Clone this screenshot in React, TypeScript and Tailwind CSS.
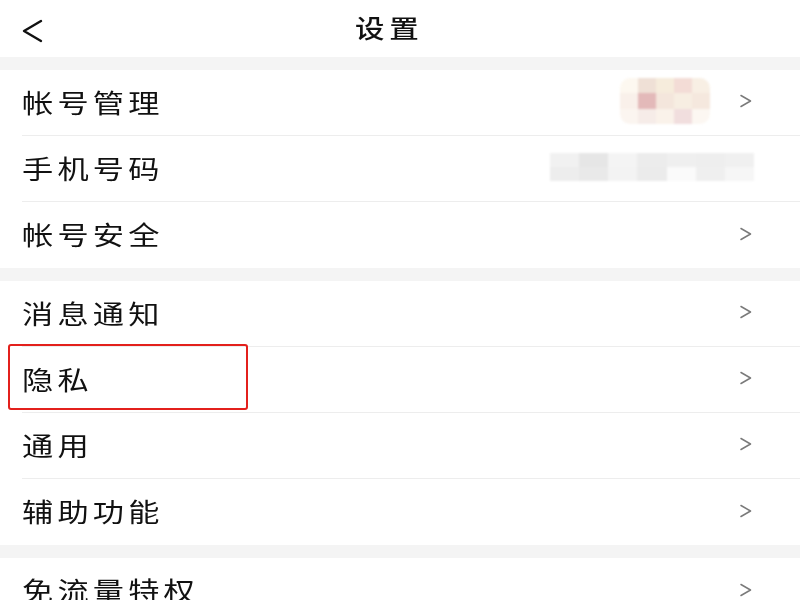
type Row = { label: string; extra?: "avatar" | "phone"; last?: boolean; highlight?: boolean };

const groups: Row[][] = [
  [{ label: "帐号管理", extra: "avatar" }, { label: "手机号码", extra: "phone" }, { label: "帐号安全", last: true }],
  [{ label: "消息通知" }, { label: "隐私", highlight: true }, { label: "通用" }, { label: "辅助功能", last: true }],
  [{ label: "免流量特权", last: true }],
];

const avatarCells = [
  "#fdf8f0", "#efe0d6", "#f6ecdc", "#f3dcd6", "#f8efe4",
  "#f9f0ea", "#e3b9b9", "#f4e6dc", "#f7eee2", "#f5e8de",
  "#fbf5f0", "#f6ece8", "#faf2ea", "#f1dede", "#fcf7f2",
];

const phoneCells = [
  "#f1f1f1", "#e6e6e6", "#f4f4f4", "#ececec", "#efefef", "#eeeeee", "#f0f0f0",
  "#ededed", "#e9e9e9", "#f3f3f3", "#ebebeb", "#fafafa", "#efefef", "#f6f6f6",
];

function Chevron() {
  return (
    <svg width="16" height="16" viewBox="0 0 16 16" fill="none" className="text-[#7a7a7a]">
      <path d="M3 2.5 L12.5 8 L3 13.5" stroke="currentColor" strokeWidth="1.5" strokeLinecap="round" strokeLinejoin="round" />
    </svg>
  );
}

function Avatar() {
  return (
    <div className="mr-[28px] grid h-[46px] w-[90px] grid-cols-5 overflow-hidden rounded-[10px] blur-[1px]">
      {avatarCells.map((c, i) => (
        <div key={i} style={{ background: c }} />
      ))}
    </div>
  );
}

function Phone() {
  return (
    <div className="grid h-[28px] w-[204px] grid-cols-7 blur-[1px]">
      {phoneCells.map((c, i) => (
        <div key={i} style={{ background: c }} />
      ))}
    </div>
  );
}

export default function App() {
  return (
    <div
      className="h-[600px] w-[800px] overflow-hidden bg-white text-[#111]"
      style={{ fontFamily: '"Noto Sans CJK SC", "Noto Sans", sans-serif' }}
    >
      {/* Header */}
      <div className="relative flex h-[57px] items-center justify-center pb-[2px]">
        <svg width="24" height="26" viewBox="0 0 24 26" fill="none" className="absolute left-[21px] top-[18px]">
          <path d="M20 3 L3 13 L20 23" stroke="#111" strokeWidth="2.4" strokeLinecap="round" strokeLinejoin="round" />
        </svg>
        <div className="mr-[24px] w-[67px]">
          <h1 className="inline-block origin-left scale-x-[1.18] whitespace-nowrap text-[25px] font-medium tracking-[4px]">设置</h1>
        </div>
      </div>

      {groups.map((group, gi) => (
        <div key={gi}>
          <div className="h-[13px] bg-[#f4f4f4]" />
          {group.map((row) => (
            <div key={row.label} className="relative pl-[22px]">
              {row.highlight && (
                <div className="absolute left-[8px] top-[-3px] h-[66px] w-[240px] rounded-[3px] border-2 border-[#e3201c]" />
              )}
              <div
                className={
                  "flex h-[66px] items-center pb-[3px] pr-[46px] " +
                  (row.last ? "" : "border-b border-[#ededed]")
                }
              >
                <div className="flex-1">
                  <span className="inline-block origin-left scale-x-[1.2] whitespace-nowrap text-[26px] tracking-[3.5px]">
                    {row.label}
                  </span>
                </div>
                {row.extra === "avatar" && <Avatar />}
                {row.extra === "phone" && <Phone />}
                {row.extra !== "phone" && <Chevron />}
              </div>
            </div>
          ))}
        </div>
      ))}
    </div>
  );
}
